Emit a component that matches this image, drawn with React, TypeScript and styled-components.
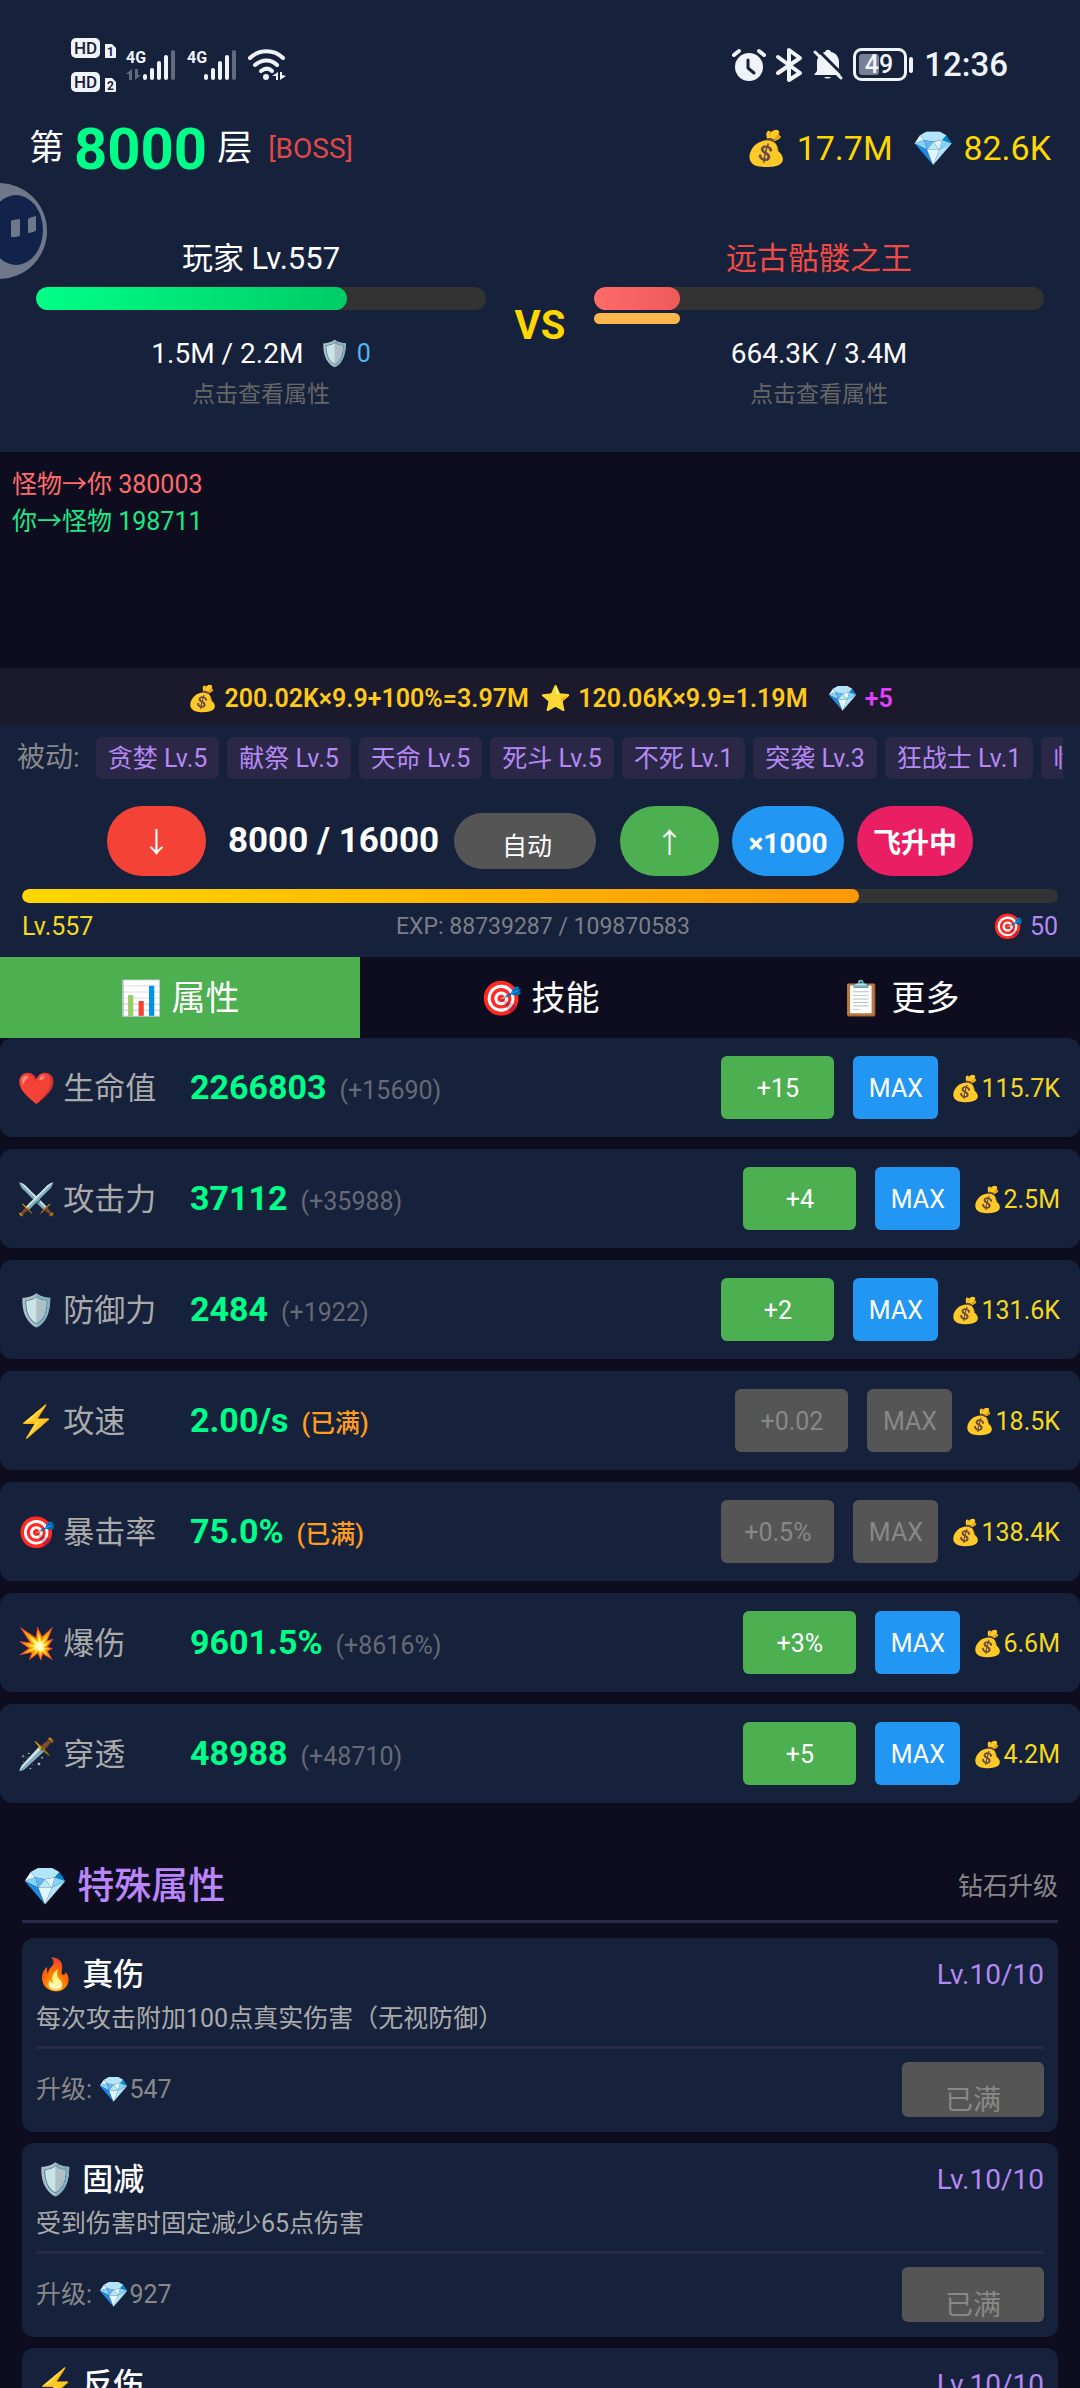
import { useState } from "react";
import styled, { createGlobalStyle } from "styled-components";

const GlobalStyle = createGlobalStyle`
	* {
		box-sizing: border-box;
	}

	body {
		margin: 0;
		background: #0d0d1f;
		color: #fff;
		font-family: Roboto, "Noto Sans CJK SC", "Noto Color Emoji", sans-serif;
	}

	button {
		border: 0;
		padding: 0;
		font-family: inherit;
		cursor: pointer;
	}

	h2, h3, p, ul {
		margin: 0;
		padding: 0;
	}
`;

const Screen = styled.div`
	position: relative;
	display: flex;
	flex-direction: column;
	height: 100vh;
	overflow: hidden;
	white-space: nowrap;
`;

const Panel = styled.header`
	flex: none;
	background: #16213c;
`;

const StatusBar = styled.div`
	display: flex;
	align-items: center;
	justify-content: space-between;
	height: 110px;
	padding: 20px 72px 0 70px;
`;

const StatusGroup = styled.div`
	display: flex;
	align-items: center;
	gap: 10px;
	font-size: 33px;
	font-weight: 500;
	line-height: 40px;
	color: #f0f3fa;

	svg {
		display: block;
		flex: none;
		overflow: visible;
	}
`;

const TopRow = styled.div`
	display: flex;
	align-items: center;
	justify-content: space-between;
	height: 76px;
	padding: 0 29px;
`;

const Floor = styled.div`
	display: flex;
	align-items: center;
	padding-top: 2px;
	font-size: 35px;
	line-height: 60px;

	strong {
		margin: 0 10px;
		font-size: 58px;
		color: #00ff88;
	}

	em {
		margin-left: 16px;
		font-size: 28px;
		font-style: normal;
		color: #e04848;
	}
`;

const Wallet = styled.div`
	display: flex;
	gap: 20px;
	font-size: 34px;
	line-height: 44px;
	color: #ffd700;
`;

const Orb = styled.button`
	position: absolute;
	top: 182px;
	left: 0;
	width: 48px;
	height: 98px;
	background: none;

	svg {
		display: block;
	}
`;

const Battle = styled.section`
	display: flex;
	align-items: center;
	padding: 55px 36px 42px;
`;

const Versus = styled.div`
	width: 108px;
	font-size: 40px;
	font-weight: 700;
	line-height: 48px;
	text-align: center;
	color: #ffd700;
`;

const Fighter = styled.div`
	flex: 1;
	display: flex;
	flex-direction: column;
	align-items: center;
`;

const FighterName = styled.div<{ $boss?: boolean }>`
	margin-bottom: 10px;
	font-size: 31px;
	line-height: 36px;
	color: ${p => (p.$boss ? "#ef4a43" : "#fff")};
`;

const Track = styled.div<{ $height: number }>`
	width: 100%;
	height: ${p => p.$height}px;
	border-radius: 12px;
	background: #333;
	overflow: hidden;
`;

const Fill = styled.div<{ $from: string; $to: string }>`
	height: 100%;
	border-radius: 12px;
	background: linear-gradient(90deg, ${p => p.$from}, ${p => p.$to});
`;

const RageSlot = styled.div`
	width: 100%;
	height: 11px;
	margin: 3px 0 12px;
`;

const Rage = styled.div`
	height: 100%;
	border-radius: 6px;
	background: #ffb74d;
`;

const Health = styled.div`
	display: flex;
	gap: 16px;
	font-size: 28px;
	line-height: 36px;

	span {
		font-size: 25px;
		color: #4fb6f0;
	}
`;

const Hint = styled.div`
	margin-top: 8px;
	font-size: 23px;
	line-height: 30px;
	color: #666;
`;

const Log = styled.section`
	flex: none;
	height: 216px;
	padding: 14px 12px;
	font-size: 25px;
	line-height: 37px;
`;

const LogLine = styled.p<{ $hurt?: boolean }>`
	color: ${p => (p.$hurt ? "#ff6b6b" : "#1de986")};
`;

const Reward = styled.section`
	flex: none;
	display: flex;
	align-items: center;
	justify-content: center;
	gap: 12px;
	height: 57px;
	padding-top: 4px;
	background: #1a1a2c;
	font-size: 25px;
	font-weight: 600;
	line-height: 32px;
	color: #ffc91a;

	b {
		margin-left: 8px;
		font-weight: 600;
		color: #e040fb;
	}
`;

const Passives = styled.div`
	display: flex;
	align-items: center;
	gap: 16px;
	padding: 12px 17px 27px;
	font-size: 28px;
	line-height: 42px;
	color: #888;
`;

const Chips = styled.ul`
	flex: 1;
	display: flex;
	gap: 8px;
	overflow: hidden;
	list-style: none;
`;

const Chip = styled.li`
	flex: none;
	padding: 2px 12px 0;
	border-radius: 6px;
	background: #2b2847;
	font-size: 25px;
	line-height: 40px;
	color: #b588f5;
`;

const Controls = styled.div`
	display: flex;
	align-items: center;
	justify-content: center;
	gap: 13px;
	margin-bottom: 13px;

	strong {
		margin: 0 2px 0 9px;
		font-size: 35px;
		line-height: 42px;
	}
`;

const Pill = styled.button<{ $bg: string; $width: number; $arrow?: boolean }>`
	width: ${p => p.$width}px;
	height: 70px;
	padding-top: 5px;
	border-radius: 35px;
	background: ${p => p.$bg};
	color: #fff;
	font-size: 28px;
	font-weight: ${p => (p.$arrow ? 400 : 700)};
	line-height: 40px;
`;

const AutoPill = styled(Pill)`
	height: 56px;
	margin-right: 11px;
	padding: 11px 0 0 4px;
	font-size: 25px;
	font-weight: 400;
`;

const Exp = styled.div`
	padding: 0 22px 15px;
`;

const ExpLabels = styled.div`
	display: flex;
	align-items: center;
	justify-content: space-between;
	margin-top: 9px;
	font-size: 25px;
	line-height: 30px;
	color: #b388f0;

	span:first-child {
		color: #f2dc1c;
	}

	small {
		font-size: 23px;
		color: #7c7f88;
	}
`;

const Tabs = styled.nav`
	flex: none;
	display: flex;
`;

const Tab = styled.button<{ $active: boolean }>`
	flex: 1;
	height: 81px;
	background: ${p => (p.$active ? "#4caf50" : "#0d0d1f")};
	color: #fff;
	font-size: 34px;
	line-height: 44px;
`;

const Content = styled.main`
	flex: 1;
	min-height: 0;
	overflow-y: auto;
	scrollbar-width: none;
`;

const StatRow = styled.div`
	display: flex;
	align-items: center;
	height: 99px;
	margin-bottom: 12px;
	padding: 0 20px 0 17px;
	border-radius: 12px;
	background: #16213c;
`;

const StatName = styled.div`
	width: 173px;
	padding-top: 3px;
	font-size: 31px;
	line-height: 40px;
	color: #aaa;
`;

const StatValue = styled.div<{ $full: boolean }>`
	flex: 1;
	padding-top: 3px;
	font-size: 34px;
	font-weight: 700;
	line-height: 40px;
	color: #00ff88;

	span {
		margin-left: 13px;
		font-size: 25px;
		font-weight: ${p => (p.$full ? 500 : 400)};
		color: ${p => (p.$full ? "#ff9d1c" : "#666a74")};
	}
`;

const UpButton = styled.button<{ $max?: boolean }>`
	width: ${p => (p.$max ? 85 : 113)}px;
	height: 63px;
	margin-left: ${p => (p.$max ? 19 : 0)}px;
	padding-top: 2px;
	border-radius: 6px;
	background: ${p => (p.$max ? "#2196f3" : "#4caf50")};
	color: #fff;
	font-size: 25px;
	line-height: 30px;

	&:disabled {
		background: #555;
		color: #888;
		cursor: default;
	}
`;

const Cost = styled.div`
	margin-left: 12px;
	padding-top: 2px;
	font-size: 25px;
	line-height: 30px;
	color: #f5d81e;
`;

const Special = styled.section`
	margin-top: 62px;
	padding: 0 22px;
`;

const SpecialHead = styled.div`
	display: flex;
	align-items: center;
	justify-content: space-between;
	margin-bottom: 15px;
	padding-bottom: 11px;
	border-bottom: 3px solid #2b2847;
	font-size: 25px;
	line-height: 44px;
	color: #888;

	h2 {
		font-size: 37px;
		font-weight: 500;
		color: #bb86fc;
	}
`;

const Card = styled.article`
	margin-bottom: 11px;
	padding: 16px 14px 15px;
	border-radius: 12px;
	background: #16213c;
`;

const CardRow = styled.div`
	display: flex;
	align-items: center;
	justify-content: space-between;
	font-size: 28px;
	line-height: 42px;
	color: #b388f0;

	h3 {
		font-size: 31px;
		font-weight: 500;
		color: #fff;
	}
`;

const CardText = styled.p`
	margin: 6px 0 10px;
	font-size: 25px;
	line-height: 34px;
	color: #aaa;
`;

const CardFoot = styled(CardRow)`
	padding-top: 13px;
	border-top: 3px solid #272a48;
	font-size: 25px;
	color: #888;
`;

const FullButton = styled(UpButton)`
	width: 142px;
	height: 55px;
	padding-top: 22px;
	font-size: 28px;
`;

const HdIcon = () => (
	<svg width="46" height="54" viewBox="0 0 46 54" fill="#f0f3fa">
		{[0, 34].map((y, i) => (
			<g key={y}>
				<rect x="1" y={y} width="29" height="20" rx="5" />
				<text
					x="15.500"
					y={y + 16}
					fontSize="17"
					fontWeight="500"
					textAnchor="middle"
					fill="#16213c">
					HD
				</text>
				<path d={`M35 ${y + 6}h7l4 4v9a1 1 0 0 1-1 1h-10z`} />
				<text
					x="40.500"
					y={y + 18}
					fontSize="12"
					fontWeight="700"
					textAnchor="middle"
					fill="#16213c">
					{i + 1}
				</text>
			</g>
		))}
	</svg>
);

const SignalIcon = ({ arrows }: { arrows?: boolean }) => (
	<svg width="51" height="32" viewBox="0 0 51 32" fill="#f0f3fa">
		<text x="0" y="14" fontSize="16" fontWeight="700">
			4G
		</text>
		{arrows && (
			<path d="M6 20v11h-3v-6h-3zM9 31v-11h3v6h3z" opacity=".35" />
		)}
		<rect x="17" y="25" width="4" height="6" rx="2" />
		<rect x="24" y="19" width="4" height="12" rx="2" />
		<rect x="31" y="12" width="4" height="19" rx="2" />
		<rect x="38" y="6" width="4" height="25" rx="2" />
		<rect x="45" y="1" width="4" height="30" rx="2" opacity=".35" />
	</svg>
);

const WifiIcon = () => (
	<svg width="38" height="32" viewBox="0 0 38 32" fill="none">
		<g stroke="#f0f3fa" strokeWidth="4" strokeLinecap="round">
			<path d="M2 9c9-9 24-9 33 0" />
			<path d="M7 16c7-6 16-6 22 0" />
			<path d="M13 22c4-3 8-3 11 0" />
		</g>
		<circle cx="18" cy="28" r="3" fill="#f0f3fa" />
		<path d="M30 23v8h-2v-4h-4zM32 31v-8h2v3l4 1z" fill="#f0f3fa" />
	</svg>
);

const AlarmIcon = () => (
	<svg width="34" height="32" viewBox="0 0 34 32" fill="none">
		<circle cx="17" cy="18" r="14" fill="#f0f3fa" />
		<path
			d="M2 6l5-4M32 6l-5-4"
			stroke="#f0f3fa"
			strokeWidth="4"
			strokeLinecap="round"
		/>
		<path
			d="M16 11v8l6 5"
			stroke="#16213c"
			strokeWidth="3"
			strokeLinecap="round"
			strokeLinejoin="round"
		/>
	</svg>
);

const BluetoothIcon = () => (
	<svg width="27" height="34" viewBox="0 0 27 34" fill="none">
		<path
			d="M2 9l22 16-11 7V2l11 8L2 25"
			stroke="#f0f3fa"
			strokeWidth="4"
			strokeLinecap="round"
			strokeLinejoin="round"
		/>
	</svg>
);

const MuteIcon = () => (
	<svg width="30" height="32" viewBox="0 0 30 32">
		<path
			d="M4 13c0-5 4-9 8-10 1-3 5-3 6 0 5 1 8 5 8 10v7l2 6H1l3-4z"
			fill="#f0f3fa"
		/>
		<path d="M11 28h7a4 3 0 0 1-7 0z" fill="#f0f3fa" />
		<path d="M4 0l27 27" stroke="#16213c" strokeWidth="3" />
		<path
			d="M2 3l26 26"
			stroke="#f0f3fa"
			strokeWidth="3"
			strokeLinecap="round"
		/>
	</svg>
);

const BatteryIcon = () => (
	<svg width="61" height="34" viewBox="0 0 61 34" fill="#f0f3fa">
		<rect
			x="1.500"
			y="1.500"
			width="51"
			height="30"
			rx="7"
			fill="none"
			stroke="#f0f3fa"
			strokeWidth="3"
		/>
		<rect x="6" y="6" width="20" height="21" rx="3" opacity=".45" />
		<rect x="56" y="9" width="4" height="16" rx="2" />
		<text x="26" y="25" fontSize="25" fontWeight="500" textAnchor="middle">
			49
		</text>
	</svg>
);

const OrbIcon = () => (
	<svg width="48" height="98" viewBox="0 0 48 98">
		<circle cx="-1" cy="49" r="48" fill="#6f788b" />
		<ellipse cx="16" cy="48" rx="27" ry="35" fill="#11234a" />
		<path d="M11 39q0-1 9-2v16q0 2-9 2z" fill="#6f788b" />
		<path d="M28 37q0-1 8-3v14q0 2-8 3z" fill="#6f788b" />
	</svg>
);

const passives = [
	"贪婪 Lv.5",
	"献祭 Lv.5",
	"天命 Lv.5",
	"死斗 Lv.5",
	"不死 Lv.1",
	"突袭 Lv.3",
	"狂战士 Lv.1",
	"临界 Lv.1",
];

const tabs = ["📊 属性", "🎯 技能", "📋 更多"];

const stats = [
	{ name: "❤️ 生命值", value: "2266803", bonus: "(+15690)", step: "+15", cost: "115.7K" },
	{ name: "⚔️ 攻击力", value: "37112", bonus: "(+35988)", step: "+4", cost: "2.5M" },
	{ name: "🛡️ 防御力", value: "2484", bonus: "(+1922)", step: "+2", cost: "131.6K" },
	{ name: "⚡ 攻速", value: "2.00/s", step: "+0.02", cost: "18.5K" },
	{ name: "🎯 暴击率", value: "75.0%", step: "+0.5%", cost: "138.4K" },
	{ name: "💥 爆伤", value: "9601.5%", bonus: "(+8616%)", step: "+3%", cost: "6.6M" },
	{ name: "🗡️ 穿透", value: "48988", bonus: "(+48710)", step: "+5", cost: "4.2M" },
];

const specials = [
	{ name: "🔥 真伤", text: "每次攻击附加100点真实伤害（无视防御）", cost: 547 },
	{ name: "🛡️ 固减", text: "受到伤害时固定减少65点伤害", cost: 927 },
	{ name: "⚡ 反伤", text: "受到攻击时反弹伤害", cost: 927 },
];

export default function App() {
	const [tab, setTab] = useState(0);
	return (
		<Screen>
			<GlobalStyle />
			<Panel>
				<StatusBar>
					<StatusGroup>
						<HdIcon />
						<SignalIcon arrows />
						<SignalIcon />
						<WifiIcon />
					</StatusGroup>
					<StatusGroup>
						<AlarmIcon />
						<BluetoothIcon />
						<MuteIcon />
						<BatteryIcon />
						12:36
					</StatusGroup>
				</StatusBar>
				<TopRow>
					<Floor>
						第<strong>8000</strong>层<em>[BOSS]</em>
					</Floor>
					<Wallet>
						<span>💰 17.7M</span>
						<span>💎 82.6K</span>
					</Wallet>
				</TopRow>
				<Battle>
					<Fighter>
						<FighterName>玩家 Lv.557</FighterName>
						<Track $height={23}>
							<Fill $from="#00ff88" $to="#00cc66" style={{ width: "69%" }} />
						</Track>
						<RageSlot />
						<Health>
							1.5M / 2.2M <span>🛡️ 0</span>
						</Health>
						<Hint>点击查看属性</Hint>
					</Fighter>
					<Versus>VS</Versus>
					<Fighter>
						<FighterName $boss>远古骷髅之王</FighterName>
						<Track $height={23}>
							<Fill $from="#ff6b6b" $to="#ee5a5a" style={{ width: "19%" }} />
						</Track>
						<RageSlot>
							<Rage style={{ width: "19%" }} />
						</RageSlot>
						<Health>664.3K / 3.4M</Health>
						<Hint>点击查看属性</Hint>
					</Fighter>
				</Battle>
			</Panel>
			<Log>
				<LogLine $hurt>怪物→你 380003</LogLine>
				<LogLine>你→怪物 198711</LogLine>
			</Log>
			<Reward>
				<span>💰 200.02K×9.9+100%=3.97M</span>
				<span>⭐ 120.06K×9.9=1.19M</span>
				<b>💎 +5</b>
			</Reward>
			<Panel as="section">
				<Passives>
					被动:
					<Chips>
						{passives.map(name => (
							<Chip key={name}>{name}</Chip>
						))}
					</Chips>
				</Passives>
				<Controls>
					<Pill $bg="#f44336" $width={99} $arrow>↓</Pill>
					<strong>8000 / 16000</strong>
					<AutoPill $bg="#555" $width={142}>自动</AutoPill>
					<Pill $bg="#4caf50" $width={99} $arrow>↑</Pill>
					<Pill $bg="#2196f3" $width={112}>×1000</Pill>
					<Pill $bg="#e91e63" $width={116}>飞升中</Pill>
				</Controls>
				<Exp>
					<Track $height={14}>
						<Fill $from="#ffd700" $to="#ff9800" style={{ width: "80.8%" }} />
					</Track>
					<ExpLabels>
						<span>Lv.557</span>
						<small>EXP: 88739287 / 109870583</small>
						<span>🎯 50</span>
					</ExpLabels>
				</Exp>
			</Panel>
			<Tabs>
				{tabs.map((name, i) => (
					<Tab key={name} $active={i === tab} onClick={() => setTab(i)}>
						{name}
					</Tab>
				))}
			</Tabs>
			<Content>
				{stats.map(stat => (
					<StatRow key={stat.name}>
						<StatName>{stat.name}</StatName>
						<StatValue $full={!stat.bonus}>
							{stat.value}
							<span>{stat.bonus || "(已满)"}</span>
						</StatValue>
						<UpButton disabled={!stat.bonus}>{stat.step}</UpButton>
						<UpButton $max disabled={!stat.bonus}>MAX</UpButton>
						<Cost>💰{stat.cost}</Cost>
					</StatRow>
				))}
				<Special>
					<SpecialHead>
						<h2>💎 特殊属性</h2>
						钻石升级
					</SpecialHead>
					{specials.map(item => (
						<Card key={item.name}>
							<CardRow>
								<h3>{item.name}</h3>
								Lv.10/10
							</CardRow>
							<CardText>{item.text}</CardText>
							<CardFoot>
								升级: 💎{item.cost}
								<FullButton disabled>已满</FullButton>
							</CardFoot>
						</Card>
					))}
				</Special>
			</Content>
			<Orb aria-label="助手">
				<OrbIcon />
			</Orb>
		</Screen>
	);
}
